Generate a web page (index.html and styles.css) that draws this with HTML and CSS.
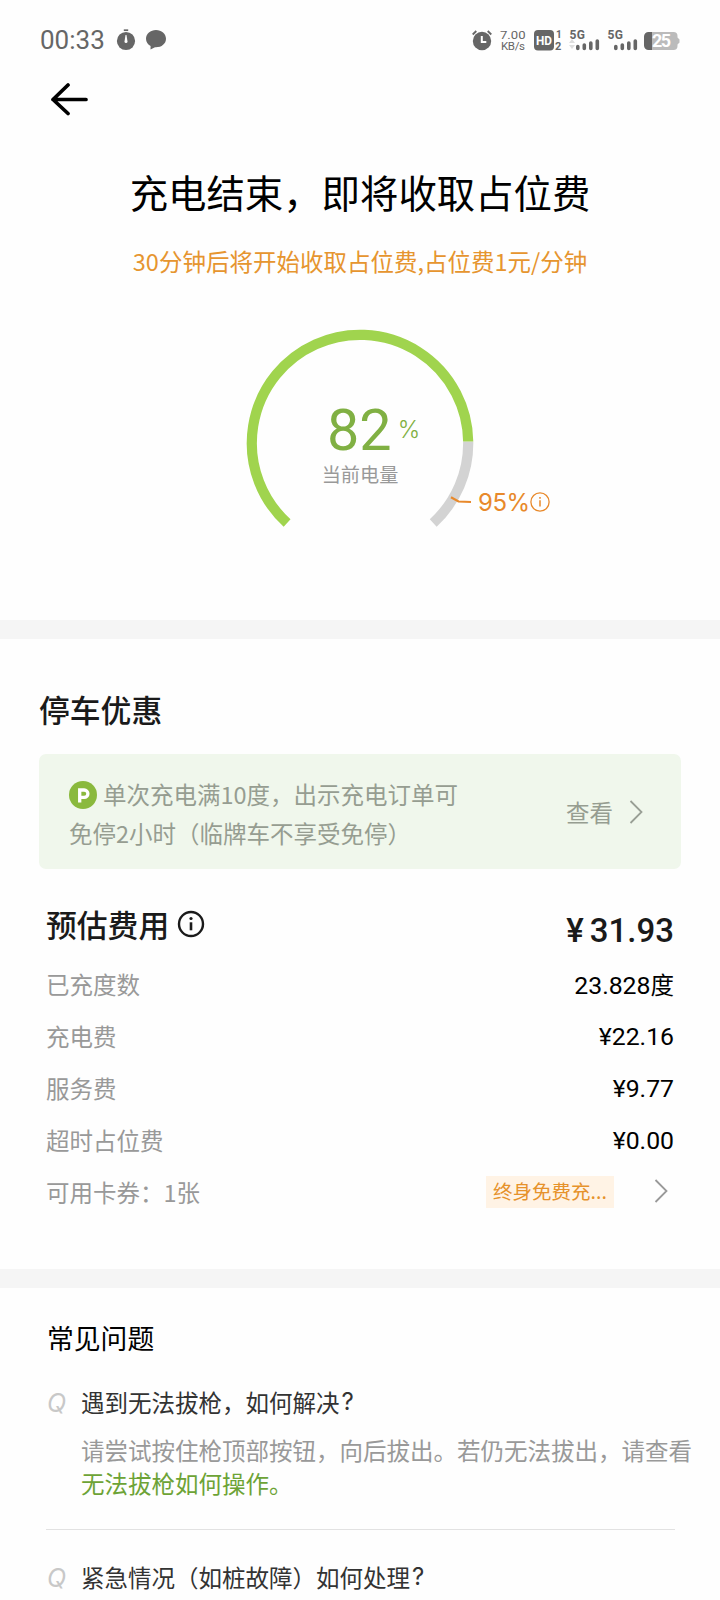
FILE: index.html
```html
<!DOCTYPE html>
<html lang="zh-CN">
<head>
<meta charset="utf-8">
<title>充电结束</title>
<link rel="stylesheet" href="styles.css">
</head>
<body>
<header class="status">
  <span class="clock">00:33</span>
  <svg class="timer" width="20" height="22" viewBox="0 0 20 22"><circle cx="10" cy="12" r="9.1" fill="#666"/><path d="M7.8 1.2h4.4" stroke="#666" stroke-width="1.7"/><path d="M9.5 6h1l1 6.5a1.5 1.5 0 1 1-3 0z" fill="#fff"/></svg>
  <svg class="bubble" width="20" height="20" viewBox="0 0 20 20"><path d="M10 0C4.500 0 0 3.800 0 8.700c0 3.300 1.800 5.800 4.600 7.300L4.500 19.500 9 17.200C15.200 17.600 20 13.900 20 8.700 20 3.800 15.500 0 10 0z" fill="#666"/></svg>
  <svg class="signals" width="210" height="24" viewBox="0 0 210 24">
    <g fill="none" stroke="#666">
      <circle cx="12" cy="13" r="9.2" fill="#666" stroke="none"/>
      <path d="M2.700 6.500 6.300 3M21.300 6.500 17.700 3" stroke-width="1.800"/>
      <path d="M11.800 8v6h4.500" stroke="#fff" stroke-width="2"/>
    </g>
    <g class="net">
      <text x="30" y="10.800" textLength="25.500" lengthAdjust="spacingAndGlyphs">7.00</text>
      <text x="31" y="22.300" textLength="24">KB/s</text>
    </g>
    <rect x="64" y="2" width="20" height="20.500" rx="4" fill="#666"/>
    <g class="bold">
      <text class="hd" x="66" y="16.500" textLength="16" lengthAdjust="spacingAndGlyphs">HD</text>
      <text x="86" y="9.600" font-size="10">1</text>
      <text x="85" y="22.300" textLength="7.500" font-size="11">2</text>
      <text x="99.500" y="11" textLength="15.500">5G</text>
      <text x="137.500" y="11" textLength="15.500">5G</text>
    </g>
    <path d="M102 11l3 4h-6zM102 21l3-4h-6z" fill="#ddd"/>
    <g stroke="#666" stroke-width="3.600" stroke-linecap="round">
      <path d="M107.800 18.500v2M114.300 17v3.500M120.800 15v5.500M127.300 13v7.500"/>
      <path d="M145.800 18.500v2M152.300 17v3.500M158.800 15v5.500M165.300 13v7.500"/>
    </g>
    <path d="M182 4h-3.500a4.500 4.500 0 0 0-4.500 4.500v9a4.500 4.500 0 0 0 4.500 4.500H182z" fill="#666"/>
    <path d="M182 4h21.500a4 4 0 0 1 4 4v1.500l2 2v3l-2 2V18a4 4 0 0 1-4 4H182z" fill="#bbb"/>
    <text class="level" x="182" y="19.300" textLength="19">25</text>
  </svg>
</header>
<nav class="nav">
  <svg width="40" height="34" viewBox="0 0 40 34"><path d="M37 17.500H4M19 3 4 17.500 19 31.500" fill="none" stroke="#000" stroke-width="3.700" stroke-linecap="round" stroke-linejoin="round"/></svg>
</nav>
<section class="hero">
  <h1 class="title">充电结束，即将收取占位费</h1>
  <p class="notice">30分钟后将开始收取占位费,占位费1元/分钟</p>
  <div class="gauge">
    <svg width="240" height="210" viewBox="240 325 240 210" fill="none" stroke-width="10.200">
      <path d="M468.200 441.500A108.200 108.200 0 0 1 433.200 523" stroke="#d3d3d3"/>
      <path d="M287.100 523A108.200 108.200 0 1 1 468.200 441.500" stroke="#a0d44e"/>
      <path d="M451 497.300l7.500 4.200 12.500.5" stroke="#e8892b" stroke-width="2.200"/>
    </svg>
    <div class="reading">
      <div class="value">82<span class="unit">%</span></div>
      <div class="caption">当前电量</div>
    </div>
    <div class="limit">95%<svg width="20" height="20" viewBox="0 0 20 20" fill="none" stroke="#e8892b"><circle cx="10" cy="10" r="9.100" stroke-width="1.300"/><path d="M10 8.300v6.200M10 5v1.800" stroke-width="1.500"/></svg></div>
  </div>
</section>
<div class="band"></div>
<section class="parking">
  <h2 class="heading">停车优惠</h2>
  <div class="card">
    <p class="offer"><svg width="28" height="28" viewBox="0 0 28 28"><circle cx="14" cy="14" r="14" fill="#8ab93d"/><path d="M10.700 21.500V9h4.500a3.500 3.500 0 0 1 0 7.400h-4.500" fill="none" stroke="#fff" stroke-width="3.300"/></svg>单次充电满10度，出示充电订单可<br>免停2小时（临牌车不享受免停）</p>
    <span class="view">查看</span>
    <svg class="chevron" width="14" height="24" viewBox="0 0 14 24"><path d="M1.500 1 12.500 12 1.500 23" fill="none" stroke="#999f95" stroke-width="1.800"/></svg>
  </div>
</section>
<section class="fees">
  <div class="total">
    <h2 class="heading">预估费用</h2>
    <svg width="28" height="28" viewBox="0 0 28 28" fill="none" stroke="#1a1a1a"><circle cx="14" cy="14" r="12" stroke-width="2.400"/><path d="M14 12.300v8" stroke-width="2.600"/><circle cx="14" cy="8.500" r="1.600" fill="#1a1a1a" stroke="none"/></svg>
    <span class="amount"><span class="yen">¥</span>31.93</span>
  </div>
  <div class="row"><span>已充度数</span><span class="num">23.828<span class="deg">度</span></span></div>
  <div class="row"><span>充电费</span><span class="num">¥22.16</span></div>
  <div class="row"><span>服务费</span><span class="num">¥9.77</span></div>
  <div class="row"><span>超时占位费</span><span class="num">¥0.00</span></div>
  <div class="row coupon"><span>可用卡券：1张</span><span class="tag">终身免费充...</span><svg width="14" height="24" viewBox="0 0 14 24"><path d="M1.500 1 12.500 12 1.500 23" fill="none" stroke="#999" stroke-width="1.800"/></svg></div>
</section>
<div class="band"></div>
<section class="faq">
  <h2 class="faq-title">常见问题</h2>
  <div class="question"><span class="q">Q</span>遇到无法拔枪，如何解决<span class="mark">?</span></div>
  <p class="answer">请尝试按住枪顶部按钮，向后拔出。若仍无法拔出，请查看<br><a class="link">无法拔枪如何操作。</a></p>
  <div class="question last"><span class="q">Q</span>紧急情况（如桩故障）如何处理<span class="mark">?</span></div>
</section>
</body>
</html>
```
FILE: styles.css
```css
* { box-sizing: border-box; }
body {
  margin: 0;
  width: 720px;
  height: 1600px;
  overflow: hidden;
  background: #fefefe;
  color: #000;
  font-family: "Noto Sans CJK SC", sans-serif;
  font-size: 23.5px;
  font-weight: 400;
  text-spacing-trim: space-all;
}
h1, h2, p { margin: 0; font-weight: 400; }
svg { display: block; flex: none; }

.status { display: flex; height: 68px; padding: 28px 40px 0 40px; align-items: flex-start; }
.clock { width: 76px; font: 26px/24px Roboto, sans-serif; color: #666; }
.timer { margin-top: 1px; }
.bubble { margin: 2px 0 0 10px; }
.signals { margin-left: auto; font-family: Roboto, sans-serif; fill: #666; }
.net { font-size: 11.5px; }
.bold { font-size: 12px; font-weight: 700; }
.hd { fill: #fff; font-size: 12.5px; }
.level { fill: #fff; font-size: 18px; font-weight: 700; }

.nav { height: 82px; padding: 14px 0 0 49px; }

.hero { height: 470px; text-align: center; }
.title { padding-top: 11px; font-size: 38.4px; line-height: 60px; }
.notice { margin-top: 20px; line-height: 40px; color: #e6952f; }
.gauge { position: relative; width: 240px; height: 210px; margin: 44px auto 0; }
.reading { position: absolute; left: 0; top: 71px; width: 240px; }
.value { display: flex; height: 64px; padding-left: 87px; font-family: Roboto, sans-serif; font-size: 57.5px; line-height: 69px; color: #80b043; }
.unit { margin-left: 6px; font-family: Inter, sans-serif; font-size: 24px; line-height: 68px; font-weight: 300; }
.caption { font-size: 19.2px; line-height: 28px; color: #999; text-align: center; }
.limit { position: absolute; left: 238px; top: 162px; display: flex; align-items: center; font-family: Inter, sans-serif; font-size: 24px; letter-spacing: -0.5px; line-height: 32px; color: #e8892b; }
.limit svg { margin-bottom: 2px; }

.band { height: 19px; background: #f5f5f5; }

.parking { padding: 50px 39px 0; }
.heading { font-size: 30.8px; line-height: 38px; font-weight: 500; color: #1a1a1a; }
.parking .heading { height: 65px; padding-top: 1px; }
.card { display: flex; align-items: center; height: 115px; padding: 0 38px 0 30px; border-radius: 7px; background: #f0f7ec; color: #969d91; }
.offer { flex: 1; padding-top: 4px; line-height: 38.5px; }
.offer svg { display: inline-block; margin-right: 6px; vertical-align: -5px; }
.view { margin-right: 16px; }

.fees { height: 400px; padding: 35px 46px 0 46px; }
.total { display: flex; height: 54px; align-items: flex-start; }
.total .heading { padding-top: 1px; }
.total svg { margin: 6px 0 0 8px; }
.amount { margin-left: auto; font-family: Roboto, sans-serif; font-size: 33px; font-weight: 500; line-height: 53px; color: #1a1a1a; }
.yen { margin-right: 6px; }
.row { display: flex; height: 52px; align-items: center; justify-content: space-between; color: #999; }
.num { font-family: Roboto, "Noto Sans CJK SC", sans-serif; font-size: 24.8px; color: #000; }
.deg { font-size: 23.5px; }
.tag { margin-left: auto; width: 128px; height: 32px; text-align: center; font-size: 19.5px; line-height: 30px; color: #e6922b; background: #fff3e5; }
.coupon svg { margin: 0 6px 2px 40px; }

.faq { padding: 29px 0 0 46px; }
.faq-title { padding: 1px 0 0 1px; font-size: 26.8px; line-height: 40px; }
.question { display: flex; height: 40px; margin-top: 24px; line-height: 40px; color: #333; }
.q { width: 35px; padding: 1px 0 0 1px; font-family: Inter, sans-serif; font-size: 25px; font-style: italic; color: #c8c8c8; }
.mark { margin-left: 2px; font-family: Inter, sans-serif; font-size: 24px; }
.answer { width: 645px; margin-top: 12px; padding-left: 35px; line-height: 33px; color: #999; white-space: nowrap; }
.link { color: #6da336; }
.question.last { width: 629px; height: 80px; margin-top: 29px; padding-top: 27px; border-top: 1px solid #e2e2e2; }
```
